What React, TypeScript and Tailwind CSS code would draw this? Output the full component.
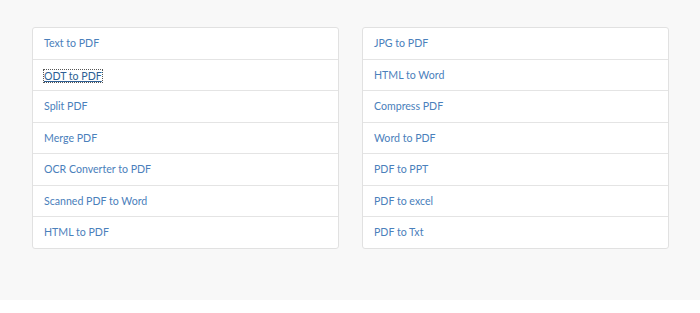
const left = [
  "Text to PDF",
  "ODT to PDF",
  "Split PDF",
  "Merge PDF",
  "OCR Converter to PDF",
  "Scanned PDF to Word",
  "HTML to PDF",
];

const right = [
  "JPG to PDF",
  "HTML to Word",
  "Compress PDF",
  "Word to PDF",
  "PDF to PPT",
  "PDF to excel",
  "PDF to Txt",
];

function LinkList({ items, focused }: { items: string[]; focused?: string }) {
  return (
    <div className="flex-1 bg-white border border-[#e1e1e1] rounded-[3px] flex flex-col">
      {items.map((item, i) => (
        <div
          key={item}
          className={
            "flex items-center pl-[11px] pr-3 pt-[2px] " +
            (i < items.length - 1 ? "h-[31.5px] border-b border-[#e4e4e4]" : "h-[30.5px]")
          }
        >
          {item === focused ? (
            <a className="text-[10.6px] text-[#2d5f94] underline outline-1 outline-dotted outline-[#555] leading-[12px]">
              {item}
            </a>
          ) : (
            <a className="text-[10.6px] text-[#4a80bb]">{item}</a>
          )}
        </div>
      ))}
    </div>
  );
}

export default function App() {
  return (
    <div className="w-[700px] h-[313px] bg-white" style={{ fontFamily: "Lato, 'Open Sans', sans-serif" }}>
      <div className="h-[300px] bg-[#f8f8f8] pt-[27px] pl-[32px] pr-[31px] flex gap-[23px] items-start">
        <LinkList items={left} focused="ODT to PDF" />
        <LinkList items={right} />
      </div>
    </div>
  );
}
